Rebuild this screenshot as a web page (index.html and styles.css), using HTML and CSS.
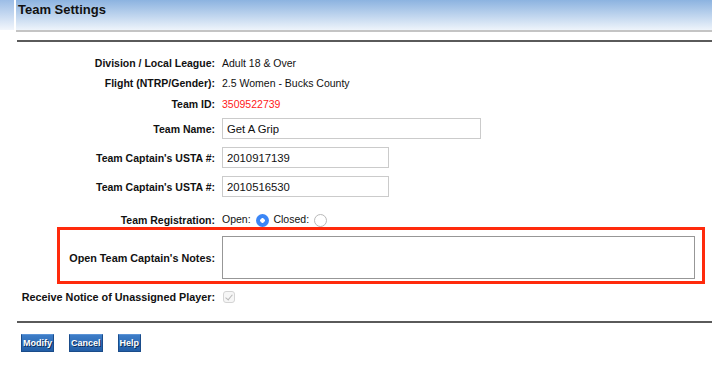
FILE: index.html
```html
<!DOCTYPE html>
<html lang="en">
<head>
    <meta charset="UTF-8">
    <meta name="viewport" content="width=device-width, initial-scale=1.0">
    <title>Team Settings</title>
    <link rel="stylesheet" href="styles.css">
</head>
<body>
    <div class="page-header">
        <div class="header-tab"></div>
        <div class="header-bar">
            <h1>Team Settings</h1>
        </div>
    </div>

    <div class="content">
        <form class="settings" id="teamForm">
            <div class="row">
                <span class="label">Division / Local League:</span>
                <span class="value">Adult 18 &amp; Over</span>
            </div>
            <div class="row">
                <span class="label">Flight (NTRP/Gender):</span>
                <span class="value">2.5 Women - Bucks County</span>
            </div>
            <div class="row">
                <span class="label">Team ID:</span>
                <span class="value team-id">3509522739</span>
            </div>
            <div class="row input-row">
                <label class="label" for="teamName">Team Name:</label>
                <div><input type="text" id="teamName" class="text-wide" value="Get A Grip"></div>
            </div>
            <div class="row input-row">
                <label class="label" for="captain1">Team Captain's USTA #:</label>
                <div><input type="text" id="captain1" class="text-short" value="2010917139"></div>
            </div>
            <div class="row input-row">
                <label class="label" for="captain2">Team Captain's USTA #:</label>
                <div><input type="text" id="captain2" class="text-short" value="2010516530"></div>
            </div>
            <div class="row reg-row">
                <span class="label">Team Registration:</span>
                <div class="value radios">
                    <label>Open: <input type="radio" name="registration" value="open" checked></label>
                    <label>Closed: <input type="radio" name="registration" value="closed"></label>
                </div>
            </div>
            <div class="row notes-row">
                <label class="label label-lg" for="notes">Open Team Captain's Notes:</label>
                <textarea id="notes"></textarea>
            </div>
            <div class="row notice-row">
                <label class="label label-lg" for="notice">Receive Notice of Unassigned Player:</label>
                <div><input type="checkbox" id="notice" checked disabled></div>
            </div>
        </form>

        <div class="actions">
            <button type="button" class="btn">Modify</button>
            <button type="button" class="btn">Cancel</button>
            <button type="button" class="btn">Help</button>
        </div>
    </div>
</body>
</html>
```

FILE: styles.css
```css
* {
    margin: 0;
    padding: 0;
    box-sizing: border-box;
}

body {
    font-family: "Liberation Sans", Arial, sans-serif;
    font-size: 10.5px;
    color: #111;
    background: white;
}

.page-header {
    display: flex;
    height: 32px;
}

.header-tab {
    width: 14px;
    height: 30px;
    background: linear-gradient(#9cbde6, #f2f6fc);
}

.header-bar {
    flex: 1;
    margin-left: 2px;
    background: linear-gradient(#8cb3e0, #eef4fb);
    border-bottom: 2px solid #c4c4c4;
}

.header-bar h1 {
    font-size: 13px;
    font-weight: bold;
    color: #111;
    padding: 2px 0 0 2px;
    line-height: 15px;
}

.content {
    margin: 8px 0 0 17px;
    border-top: 2px solid #5a5a5a;
}

.settings {
    padding-top: 10.5px;
}

.row {
    display: grid;
    grid-template-columns: 198px 1fr;
    column-gap: 7px;
    align-items: center;
    min-height: 20.5px;
}

.label {
    font-weight: bold;
    text-align: right;
    white-space: nowrap;
}

.label-lg {
    font-size: 10.8px;
}

.team-id {
    color: #ff1a1a;
}

.input-row {
    min-height: 29px;
}

input[type="text"] {
    display: block;
    height: 21px;
    padding: 0 4px;
    border: 1.5px solid #cbcbcb;
    font-family: inherit;
    font-size: 11.3px;
    color: #111;
}

.text-wide {
    width: 259px;
}

.text-short {
    width: 167px;
}

.reg-row {
    min-height: 26px;
    padding-top: 11px;
}

.radios label {
    margin-right: 2px;
}

input[type="radio"] {
    appearance: none;
    width: 13px;
    height: 13px;
    border-radius: 50%;
    border: 1px solid #b9b9b9;
    background: white;
    vertical-align: -4px;
    margin-left: 2px;
}

input[type="radio"]:checked {
    border: none;
    background: radial-gradient(circle, white 0 2px, #3b86f6 2.5px);
}

.notes-row {
    grid-template-columns: 155px 1fr;
    margin: 0 7px 0 40px;
    border: 3px solid #ff2a0c;
    padding: 6px 7px 2px 0;
}

textarea {
    display: block;
    width: 100%;
    height: 43px;
    border: 1px solid #979797;
    resize: none;
}

.notice-row {
    min-height: 26px;
}

input[type="checkbox"] {
    appearance: none;
    display: block;
    width: 12px;
    height: 12px;
    margin-left: 1px;
    border: 1px solid #d4d4d4;
    border-radius: 3px;
    background: #f6f6f6;
    position: relative;
}

input[type="checkbox"]:checked::after {
    content: "";
    position: absolute;
    left: 3px;
    top: 1px;
    width: 3px;
    height: 6px;
    border: solid #b8b8b8;
    border-width: 0 1.5px 1.5px 0;
    transform: rotate(40deg);
}

.actions {
    margin-top: 11px;
    border-top: 2px solid #5a5a5a;
    padding: 11px 0 0 4px;
    display: flex;
    gap: 15px;
}

.btn {
    height: 18px;
    padding: 0 1px;
    font-family: inherit;
    font-size: 9px;
    font-weight: bold;
    line-height: 16px;
    color: white;
    text-shadow: 1px 1px 0 #0d2c55;
    background: linear-gradient(#3d7dc8, #225ea6);
    border: 1px solid #1a4c8a;
    border-top-color: #5b93d6;
    cursor: pointer;
}
```
